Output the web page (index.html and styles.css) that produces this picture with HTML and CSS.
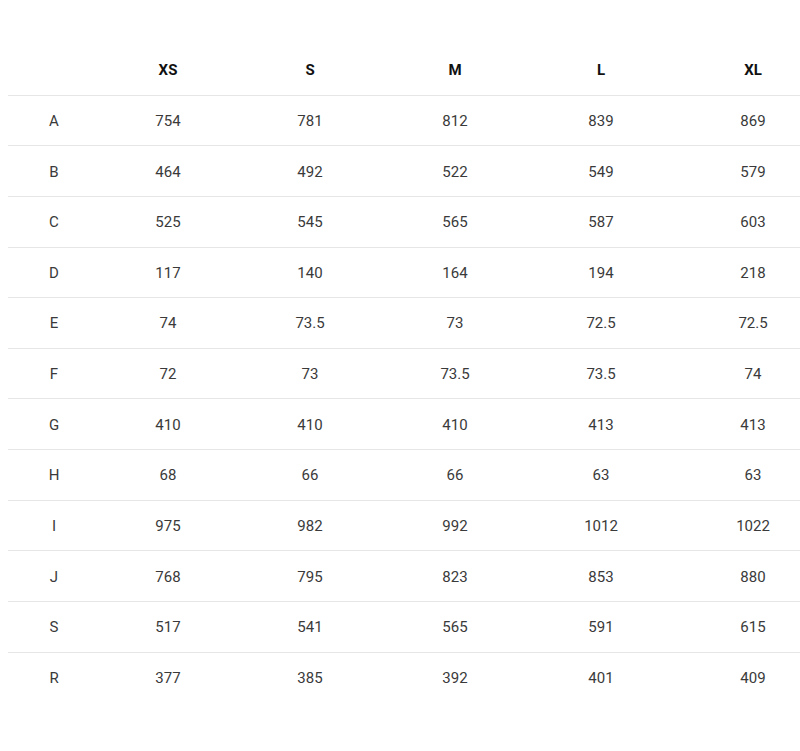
FILE: index.html
```html
<!DOCTYPE html>
<html>
<head>
<meta charset="utf-8">
<link rel="stylesheet" href="styles.css">
</head>
<body>
<div class="wrap">
  <div class="table">
    <div class="row head"><div></div><div>XS</div><div>S</div><div>M</div><div>L</div><div>XL</div></div>
    <div class="row"><div>A</div><div>754</div><div>781</div><div>812</div><div>839</div><div>869</div></div>
    <div class="row"><div>B</div><div>464</div><div>492</div><div>522</div><div>549</div><div>579</div></div>
    <div class="row"><div>C</div><div>525</div><div>545</div><div>565</div><div>587</div><div>603</div></div>
    <div class="row"><div>D</div><div>117</div><div>140</div><div>164</div><div>194</div><div>218</div></div>
    <div class="row"><div>E</div><div>74</div><div>73.5</div><div>73</div><div>72.5</div><div>72.5</div></div>
    <div class="row"><div>F</div><div>72</div><div>73</div><div>73.5</div><div>73.5</div><div>74</div></div>
    <div class="row"><div>G</div><div>410</div><div>410</div><div>410</div><div>413</div><div>413</div></div>
    <div class="row"><div>H</div><div>68</div><div>66</div><div>66</div><div>63</div><div>63</div></div>
    <div class="row"><div>I</div><div>975</div><div>982</div><div>992</div><div>1012</div><div>1022</div></div>
    <div class="row"><div>J</div><div>768</div><div>795</div><div>823</div><div>853</div><div>880</div></div>
    <div class="row"><div>S</div><div>517</div><div>541</div><div>565</div><div>591</div><div>615</div></div>
    <div class="row last"><div>R</div><div>377</div><div>385</div><div>392</div><div>401</div><div>409</div></div>
  </div>
</div>
</body>
</html>
```
FILE: styles.css
```css
html, body {
  margin: 0;
  padding: 0;
  background: #ffffff;
}
body {
  font-family: Roboto, "Liberation Sans", sans-serif;
  font-size: 15px;
  color: #3a3a3a;
  overflow: hidden;
}
.wrap {
  margin: 45px 0 0 8px;
  overflow: hidden;
}
.table {
  width: 822px;
}
.row {
  display: grid;
  grid-template-columns: 92px 136px 148px 142px 150px 154px;
  height: 50.64px;
  box-sizing: border-box;
  padding-top: 1px;
  border-bottom: 1px solid #e6e6e6;
  align-items: center;
  text-align: center;
}
.row.last {
  border-bottom: none;
}
.head {
  font-weight: 700;
  color: #111111;
}
```
